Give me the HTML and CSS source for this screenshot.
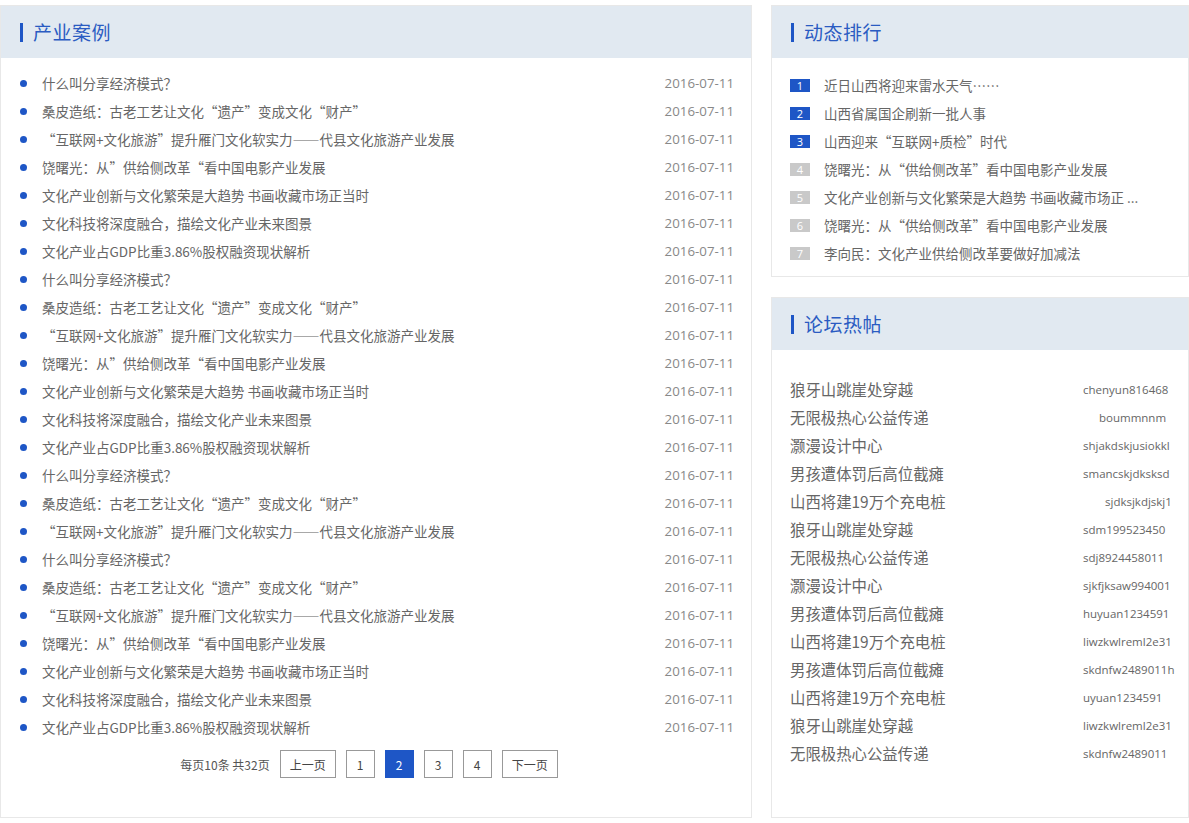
FILE: index.html
```html
<!DOCTYPE html>
<html lang="zh-CN">
<head>
<meta charset="utf-8">
<title>产业案例</title>
<link rel="stylesheet" href="styles.css">
</head>
<body>
<div class="page">
  <section class="panel main">
    <div class="panel-head"><span class="bar"></span><h2>产业案例</h2></div>
    <ul class="news">
      <li><span class="t">什么叫分享经济模式？</span><span class="d">2016-07-11</span></li>
      <li><span class="t">桑皮造纸：古老工艺让文化“遗产”变成文化“财产”</span><span class="d">2016-07-11</span></li>
      <li><span class="t">“互联网+文化旅游”提升雁门文化软实力——代县文化旅游产业发展</span><span class="d">2016-07-11</span></li>
      <li><span class="t">饶曙光：从”供给侧改革“看中国电影产业发展</span><span class="d">2016-07-11</span></li>
      <li><span class="t">文化产业创新与文化繁荣是大趋势 书画收藏市场正当时</span><span class="d">2016-07-11</span></li>
      <li><span class="t">文化科技将深度融合，描绘文化产业未来图景</span><span class="d">2016-07-11</span></li>
      <li><span class="t">文化产业占GDP比重3.86%股权融资现状解析</span><span class="d">2016-07-11</span></li>
      <li><span class="t">什么叫分享经济模式？</span><span class="d">2016-07-11</span></li>
      <li><span class="t">桑皮造纸：古老工艺让文化“遗产”变成文化“财产”</span><span class="d">2016-07-11</span></li>
      <li><span class="t">“互联网+文化旅游”提升雁门文化软实力——代县文化旅游产业发展</span><span class="d">2016-07-11</span></li>
      <li><span class="t">饶曙光：从”供给侧改革“看中国电影产业发展</span><span class="d">2016-07-11</span></li>
      <li><span class="t">文化产业创新与文化繁荣是大趋势 书画收藏市场正当时</span><span class="d">2016-07-11</span></li>
      <li><span class="t">文化科技将深度融合，描绘文化产业未来图景</span><span class="d">2016-07-11</span></li>
      <li><span class="t">文化产业占GDP比重3.86%股权融资现状解析</span><span class="d">2016-07-11</span></li>
      <li><span class="t">什么叫分享经济模式？</span><span class="d">2016-07-11</span></li>
      <li><span class="t">桑皮造纸：古老工艺让文化“遗产”变成文化“财产”</span><span class="d">2016-07-11</span></li>
      <li><span class="t">“互联网+文化旅游”提升雁门文化软实力——代县文化旅游产业发展</span><span class="d">2016-07-11</span></li>
      <li><span class="t">什么叫分享经济模式？</span><span class="d">2016-07-11</span></li>
      <li><span class="t">桑皮造纸：古老工艺让文化“遗产”变成文化“财产”</span><span class="d">2016-07-11</span></li>
      <li><span class="t">“互联网+文化旅游”提升雁门文化软实力——代县文化旅游产业发展</span><span class="d">2016-07-11</span></li>
      <li><span class="t">饶曙光：从”供给侧改革“看中国电影产业发展</span><span class="d">2016-07-11</span></li>
      <li><span class="t">文化产业创新与文化繁荣是大趋势 书画收藏市场正当时</span><span class="d">2016-07-11</span></li>
      <li><span class="t">文化科技将深度融合，描绘文化产业未来图景</span><span class="d">2016-07-11</span></li>
      <li><span class="t">文化产业占GDP比重3.86%股权融资现状解析</span><span class="d">2016-07-11</span></li>
    </ul>
    <div class="pager">
      <span class="info">每页10条 共32页</span>
      <a class="btn wide">上一页</a>
      <a class="btn">1</a>
      <a class="btn on">2</a>
      <a class="btn">3</a>
      <a class="btn">4</a>
      <a class="btn wide">下一页</a>
    </div>
  </section>

  <div class="side">
    <section class="panel rank">
      <div class="panel-head"><span class="bar"></span><h2>动态排行</h2></div>
      <ol class="ranks">
        <li><span class="n top">1</span><span class="t">近日山西将迎来雷水天气……</span></li>
        <li><span class="n top">2</span><span class="t">山西省属国企刷新一批人事</span></li>
        <li><span class="n top">3</span><span class="t">山西迎来“互联网+质检”时代</span></li>
        <li><span class="n">4</span><span class="t">饶曙光：从“供给侧改革”看中国电影产业发展</span></li>
        <li><span class="n">5</span><span class="t">文化产业创新与文化繁荣是大趋势 书画收藏市场正 ...</span></li>
        <li><span class="n">6</span><span class="t">饶曙光：从“供给侧改革”看中国电影产业发展</span></li>
        <li><span class="n">7</span><span class="t">李向民：文化产业供给侧改革要做好加减法</span></li>
      </ol>
    </section>

    <section class="panel hot">
      <div class="panel-head"><span class="bar"></span><h2>论坛热帖</h2></div>
      <ul class="posts">
        <li><span class="t">狼牙山跳崖处穿越</span><span class="u">chenyun816468</span></li>
        <li><span class="t">无限极热心公益传递</span><span class="u mid">boummnnm</span></li>
        <li><span class="t">灏漫设计中心</span><span class="u">shjakdskjusiokkl</span></li>
        <li><span class="t">男孩遭体罚后高位截瘫</span><span class="u">smancskjdksksd</span></li>
        <li><span class="t">山西将建19万个充电桩</span><span class="u mid2">sjdksjkdjskj1</span></li>
        <li><span class="t">狼牙山跳崖处穿越</span><span class="u">sdm199523450</span></li>
        <li><span class="t">无限极热心公益传递</span><span class="u">sdj8924458011</span></li>
        <li><span class="t">灏漫设计中心</span><span class="u">sjkfjksaw994001</span></li>
        <li><span class="t">男孩遭体罚后高位截瘫</span><span class="u">huyuan1234591</span></li>
        <li><span class="t">山西将建19万个充电桩</span><span class="u">liwzkwlreml2e31</span></li>
        <li><span class="t">男孩遭体罚后高位截瘫</span><span class="u">skdnfw2489011h</span></li>
        <li><span class="t">山西将建19万个充电桩</span><span class="u">uyuan1234591</span></li>
        <li><span class="t">狼牙山跳崖处穿越</span><span class="u">liwzkwlreml2e31</span></li>
        <li><span class="t">无限极热心公益传递</span><span class="u">skdnfw2489011</span></li>
      </ul>
    </section>
  </div>
</div>
</body>
</html>
```

FILE: styles.css
```css
* { box-sizing: border-box; }
html, body { margin: 0; padding: 0; background: #fff; }
body {
  font-family: "Noto Sans CJK SC", "Noto Sans", "Liberation Sans", sans-serif;
  color: #666;
}
ul, ol { list-style: none; margin: 0; padding: 0; }
h2 { margin: 0; font-weight: normal; }

.page {
  display: flex;
  align-items: flex-start;
  gap: 19px;
  padding-top: 5px;
  width: 1189px;
}

.panel {
  border: 1px solid #e8e8e8;
  background: #fff;
}
.main { width: 752px; height: 813px; }
.side { width: 418px; display: flex; flex-direction: column; gap: 20px; }

.panel-head {
  height: 52px;
  background: #e1e9f1;
  display: flex;
  align-items: center;
  padding-left: 19px;
}
.bar {
  width: 3px;
  height: 19px;
  background: #1e56c6;
  margin-right: 10px;
}
.panel-head h2 {
  font-size: 19px;
  color: #2a5bc2;
  line-height: 1;
  letter-spacing: 0.5px;
  position: relative;
  top: -1px;
}

/* main list */
.news { padding: 11px 17px 0 19px; }
.news li {
  height: 28px;
  display: flex;
  align-items: center;
  font-size: 13.5px;
}
.news li::before {
  content: "";
  width: 7px;
  height: 7px;
  border-radius: 50%;
  background: #1e56c6;
  margin: 0 15px 0 0;
  flex: none;
}
.news .t { flex: 1; color: #666; }
.news .d { font-size: 13.3px; color: #888; font-family: "Open Sans", "Noto Sans", sans-serif; }

.pager {
  display: flex;
  justify-content: center;
  align-items: center;
  gap: 10px;
  margin-top: 9px;
  padding-right: 14px;
  font-size: 12px;
  color: #555;
}
.btn {
  height: 28px;
  min-width: 29px;
  border: 1px solid #999;
  display: flex;
  align-items: center;
  justify-content: center;
  color: #444;
  font-size: 12px;
}
.btn.wide { width: 56px; }
.btn.on { background: #1e56c6; border-color: #1e56c6; color: #fff; }

/* rank */
.rank { height: 272px; }
.ranks { padding: 13px 0 0 18px; }
.ranks li {
  height: 28px;
  display: flex;
  align-items: center;
  font-size: 13.5px;
}
.ranks .n {
  width: 20px;
  height: 13px;
  background: #c9c9c9;
  color: #fff;
  font-size: 11px;
  line-height: 13px;
  text-align: center;
  margin-right: 14px;
  font-family: "Open Sans", sans-serif;
}
.ranks .n.top { background: #1e56c6; }
.ranks .t { color: #666; white-space: nowrap; }

/* hot posts */
.hot { height: 521px; }
.posts { padding: 25px 0 0 18px; }
.posts li {
  height: 28px;
  display: flex;
  align-items: center;
}
.posts .t { width: 293px; font-size: 15.4px; color: #666; }
.posts .u {
  font-size: 11.5px;
  color: #666;
  font-family: "Open Sans", "Noto Sans", sans-serif;
  white-space: nowrap;
}
.posts .u.mid { padding-left: 16px; }
.posts .u.mid2 { padding-left: 22px; }
```
